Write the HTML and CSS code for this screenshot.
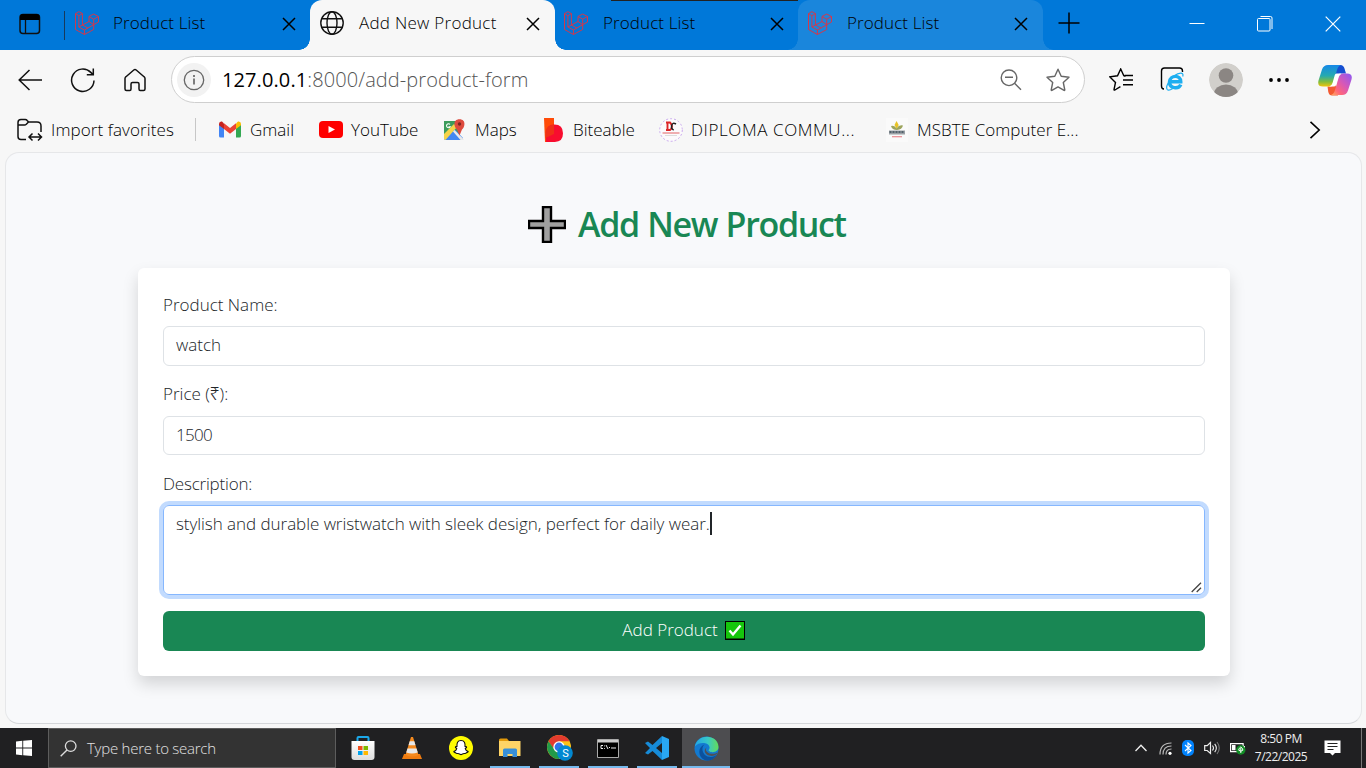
FILE: index.html
```html
<!DOCTYPE html>
<html lang="en">
<head>
<meta charset="utf-8">
<title>Add New Product</title>
<link rel="stylesheet" href="styles.css">
</head>
<body>
<svg class="defs" width="0" height="0">
  <symbol id="laravel" viewBox="0 0 24 24">
    <g fill="none" stroke="#dc3545" stroke-width=".95" stroke-linejoin="round">
      <path d="M.5 2.600 3.900.6 7.400 2.600V14L14 10.500v-5L18.700 3l4.800 2.500V11l-4.800 2.700v4.800l-9.300 5-8.900-5z"/>
      <path d="M.5 2.600 3.900 4.700 7.400 2.600M3.900 4.700V16l5.500 3 9.300-5.300M14 5.500l4.700 2.700 4.800-2.700M18.700 8.200v5.500M14 10.500l4.700 3.200M9.400 19v4.500M3.900 16l3.500-2 5.500 3"/>
    </g>
  </symbol>
  <symbol id="close" viewBox="0 0 14 14"><path d="M1 1 13 13M13 1 1 13" fill="none" stroke="currentColor" stroke-width="1.500"/></symbol>
</svg>

<header class="tabbar">
  <div class="workspace">
    <svg width="22" height="22" viewBox="0 0 22 22"><rect x="1" y="1.500" width="19.500" height="19" rx="3" fill="none" stroke="#101010" stroke-width="1.500"/><path d="M1 7V4a3 3 0 0 1 3-3h13.500a3 3 0 0 1 3 3v3z" fill="#000"/><path d="M6.500 7v13" stroke="#101010" stroke-width="1.300"/></svg>
  </div>
  <div class="tab tab-first"><svg class="fav"><use href="#laravel"/></svg><span class="tab-title">Product List</span><svg class="x"><use href="#close"/></svg></div>
  <div class="tab tab-active">
    <svg class="fav" viewBox="0 0 24 24"><g fill="none" stroke="#111" stroke-width="1.400"><circle cx="12" cy="12" r="11.200"/><ellipse cx="12" cy="12" rx="5" ry="11.200"/><path d="M2 7.700h20M2 16.300h20"/></g></svg>
    <span class="tab-title">Add New Product</span><svg class="x"><use href="#close"/></svg>
  </div>
  <div class="tab tab-third"><svg class="fav"><use href="#laravel"/></svg><span class="tab-title">Product List</span><svg class="x"><use href="#close"/></svg></div>
  <div class="tab tab-hover"><svg class="fav"><use href="#laravel"/></svg><span class="tab-title">Product List</span><svg class="x"><use href="#close"/></svg></div>
  <svg class="newtab" width="22" height="22" viewBox="0 0 22 22"><path d="M11 .5v21M.5 11h21" stroke="#000" stroke-width="1.500"/></svg>
  <div class="window-buttons">
    <svg width="16" height="16" viewBox="0 0 16 16"><path d="M.5 7.500h15" stroke="#fff"/></svg>
    <svg width="16" height="16" viewBox="0 0 16 16"><rect x=".5" y="2.500" width="12.500" height="12.500" rx="1" fill="none" stroke="#fff"/><path d="M3.500 .5h10a1.500 1.500 0 0 1 1.500 1.500v11" fill="none" stroke="#fff"/></svg>
    <svg width="16" height="16" viewBox="0 0 16 16"><path d="M.7.7 15.300 15.300M15.300.7.7 15.300" stroke="#fff" stroke-width="1.200"/></svg>
  </div>
</header>

<nav class="toolbar">
  <svg class="nav-back" width="24" height="22" viewBox="0 0 24 22"><path d="M11.500 1 1.200 11l10.300 10M1.200 11H24" fill="none" stroke="#111" stroke-width="1.500"/></svg>
  <svg class="nav-reload" width="26" height="26" viewBox="0 0 26 26"><path d="M24 13.500A11.200 11.200 0 1 1 20.800 5.400L23 7.600M23.300 1.500v6.300h-6.500" fill="none" stroke="#111" stroke-width="1.500"/></svg>
  <svg class="nav-home" width="22" height="24" viewBox="0 0 22 24"><path d="M1 10.600Q1 9.500 2 8.700L9.800 2q1.200-1 2.400 0L20 8.700q1 .8 1 1.900V21q0 1.500-1.500 1.500h-3.300q-1.200 0-1.200-1.500v-5q0-1.500-1.500-1.500h-5Q7 14.500 7 16v5q0 1.500-1.200 1.500H2.500Q1 22.500 1 21z" fill="none" stroke="#111" stroke-width="1.500"/></svg>
  <div class="address">
    <span class="site-info"><svg width="22" height="22" viewBox="0 0 22 22"><circle cx="11" cy="11" r="9.700" fill="none" stroke="#666" stroke-width="1.300"/><path d="M11 9.500v6" stroke="#555" stroke-width="1.500"/><circle cx="11" cy="6.900" r="1" fill="#555"/></svg></span>
    <span class="url"><b>127.0.0.1</b>:8000/add-product-form</span>
    <svg class="zoom-out" width="22" height="22" viewBox="0 0 22 22"><circle cx="9" cy="8.800" r="7.800" fill="none" stroke="#666" stroke-width="1.400"/><path d="M5 8.300h8M14.800 14.500l6.200 6.200" stroke="#666" stroke-width="1.400"/></svg>
    <svg class="star" width="24" height="24" viewBox="0 0 24 24"><path d="M12 1.200l3.200 7 7.800 1-5.700 5.300 1.500 7.500q0 .6-.7.400L12 18.900l-6.100 3.500q-.7.200-.7-.4l1.500-7.500L1 9.200l7.800-1z" fill="none" stroke="#666" stroke-width="1.400" stroke-linejoin="round"/></svg>
  </div>
  <svg class="fav-list" width="24" height="24" viewBox="0 0 24 24"><path d="M16.500 8.300 14.800 7.700 11.700 1 8.500 7.800.9 8.900l5.600 5.500L5 21.500q0 .9.900.5l5.500-3.300M14 12h10M15.500 7.500H24M14 16.800h10" fill="none" stroke="#000" stroke-width="1.400"/></svg>
  <svg class="ie" width="24" height="25" viewBox="0 0 24 25"><path d="M22.500 5V4q0-3-3-3h-15q-3 0-3 3v15q0 3 2.500 3" fill="none" stroke="#000" stroke-width="1.400"/><path d="M9.500 14.800h11.300c.2-7.300-10.800-7.300-11.300 0-.2 7 9.200 7.700 11.300 2.800" fill="none" stroke="#1eaef0" stroke-width="3.400"/><path d="M22.700 9.500c1.500-5-4-4-8.700-.4-5 3.900-8.700 10.500-6.800 13.400 1 1.300 3.300.5 5.500-1" fill="none" stroke="#1eaef0" stroke-width="1.200"/></svg>
  <svg class="avatar" width="34" height="34" viewBox="0 0 34 34"><defs><clipPath id="face"><circle cx="17" cy="17" r="17"/></clipPath></defs><g clip-path="url(#face)"><circle cx="17" cy="17" r="17" fill="#d1cfcb"/><circle cx="17" cy="12.500" r="7.300" fill="#8b8683"/><ellipse cx="17" cy="31" rx="12" ry="9.500" fill="#8b8683"/></g></svg>
  <svg class="more" width="20" height="4" viewBox="0 0 20 4"><g fill="#000"><circle cx="2" cy="2" r="1.900"/><circle cx="10" cy="2" r="1.900"/><circle cx="18" cy="2" r="1.900"/></g></svg>
  <svg class="copilot" width="34" height="32" viewBox="0 0 34 32">
    <defs>
      <linearGradient id="cpA" x1="0" y1="0" x2="0" y2="1"><stop offset="0" stop-color="#1688e8"/><stop offset=".5" stop-color="#25aab0"/><stop offset=".78" stop-color="#83bd3c"/><stop offset="1" stop-color="#f1c40a"/></linearGradient>
      <linearGradient id="cpB" x1="1" y1="0" x2="0" y2="1"><stop offset="0" stop-color="#8c58f4"/><stop offset=".45" stop-color="#d858b6"/><stop offset=".75" stop-color="#ff667a"/><stop offset="1" stop-color="#ffae58"/></linearGradient>
    </defs>
    <path d="M17 1h5.500q3 0 4 3.500l1.500 5h-5q-4 0-5.500 4z" fill="#164fd1"/>
    <path d="M9.500 22.500h3q3.500 0 4.500-4l3 13h-6q-2.800 0-3.700-3.500z" fill="#f35a32"/>
    <path d="M10 1h13q-3 1-4 5l-3.500 12q-1.300 4.500-5 4.500H5q-6 0-4.500-6L4 5.500Q5.500 1 10 1z" fill="url(#cpA)"/>
    <path d="M24 31H13q3-1 4-5l3.500-12q1.200-4.500 5-4.500H29q6 0 4.500 6L30 26.500Q28.500 31 24 31z" fill="url(#cpB)"/>
    <path d="M18.500 9.500h4.800q-2.300.8-3 3.500l-2.300 8q-.6 1.500-2.200 1.500h-4.600q2.600-.8 3.300-3.500l2.300-8q.5-1.500 1.700-1.500z" fill="#fff"/>
  </svg>
</nav>

<nav class="bookmarks">
  <a class="bm bm-import"><svg width="26" height="24" viewBox="0 0 26 24"><path d="M9 21.500H4q-3 0-3-3v-14q0-3 3-3h4.200q1.200 0 2 1L11.500 4H20q4 0 4 4v6M1 7h6.500q1 0 1.800-.8L11.500 4M12 19h12.500M15.500 15.500 12 19l3.500 3.500M21 15.500l3.500 3.500-3.500 3.500" fill="none" stroke="#111" stroke-width="1.500"/></svg><span>Import favorites</span></a>
  <i class="bm-divider"></i>
  <a class="bm bm-gmail"><svg width="22" height="17" viewBox="0 0 22 17"><path d="M0 3v12q0 1.500 1.500 1.500H5V7z" fill="#4285f4"/><path d="M22 3v12q0 1.500-1.500 1.500H17V7z" fill="#34a853"/><path d="M17 2.500V8l5-3.800V3q0-3-3-2.500z" fill="#fbbc04"/><path d="M0 4.200 5 8V2.500L3 .5Q0 0 0 3z" fill="#c5221f"/><path d="M5 2.300 11 7l6-4.700V8l-6 4.700L5 8z" fill="#ea4335"/></svg><span>Gmail</span></a>
  <a class="bm bm-youtube"><svg width="24" height="17" viewBox="0 0 24 17"><rect width="24" height="17" rx="4" fill="#f00"/><path d="M9.500 5v7l6.500-3.500z" fill="#fff"/></svg><span>YouTube</span></a>
  <a class="bm bm-maps"><svg width="22" height="22" viewBox="0 0 22 22"><path d="M1 2h15v18H1z" fill="#3c9b5b"/><path d="M1 21 11.500 10 20 19v2z" fill="#4287f1"/><path d="M1 20V15L11 5l3 3L2.500 21z" fill="#f6d348"/><path d="m11.500 11 9 9v1h-3L10 12.500z" fill="#e9e9e9"/><path d="M16.500.3c-7 0-5.500 8-2.500 10.200l2.500 6 2.500-6C22 8 23.300.3 16.500.3z" fill="#dd4b3e"/><circle cx="16.500" cy="5" r="1.700" fill="#7c2720"/><path d="M7 5.300a2 2 0 1 0 .3 2.400H5.500" fill="none" stroke="#fff" stroke-width="1.100"/></svg><span>Maps</span></a>
  <a class="bm bm-biteable"><svg width="20" height="24" viewBox="0 0 20 24"><path d="M0 0h10v7l-5 17H1z" fill="#ff4b08"/><path d="M2 24V15q0-8.500 8.500-8.500T19 15.300 10.500 24z" fill="#f80d2f"/><path d="M1.500 20V14q1-7 8.500-7.500V16z" fill="#f03018"/></svg><span>Biteable</span></a>
  <a class="bm bm-diploma"><svg width="24" height="24" viewBox="0 0 24 24"><circle cx="12" cy="12" r="11.300" fill="#fcfafc" stroke="#c8a8ee" stroke-dasharray="2 2"/><path d="M8.500 4v8M7 4.500h4q4 4 0 7.500H7" fill="none" stroke="#dc2428" stroke-width="1.900"/><path d="M17 6q-3.500-2-4.300 1.500t2 4.500" fill="none" stroke="#222" stroke-width="1.500"/><path d="M3.500 15h17" stroke="#e88587" stroke-width="1.300"/><path d="M6 17.500h12" stroke="#ddd" stroke-width="1"/></svg><span>DIPLOMA COMMU...</span></a>
  <a class="bm bm-msbte"><svg width="22" height="24" viewBox="0 0 22 24"><path fill="#fafafa" d="M0 0h22v24H0z"/><path d="m10.500 3 2.200 4-2 4-2.200-4z" fill="#e8c326"/><path d="M5 8q4-1 5.500 2.500Q13 6.500 17 7.500q-1 4-6 4.500-5 0-6-4z" fill="#9ca45c"/><path d="M3 12.500h16v4H3z" fill="#9aa0a5"/><path d="M3.500 14h15" stroke="#3b4c58" stroke-width="1.500" stroke-dasharray="2 1"/><path d="M6 18.700h10" stroke="#ea8c92" stroke-width="1.200"/></svg><span>MSBTE Computer E...</span></a>
  <svg class="chevron" width="12" height="18" viewBox="0 0 12 18"><path d="m1.500.8 8.700 8.200-8.700 8.200" fill="none" stroke="#000" stroke-width="1.600"/></svg>
</nav>

<main class="page">
  <h1 class="page-title">
    <svg width="38" height="37" viewBox="0 0 38 37"><path d="M15 1h8v14h14v7H23v14h-8V22H1v-7h14z" fill="#a0a0a0" stroke="#000" stroke-width="2.400"/></svg>
    <span>Add New Product</span>
  </h1>
  <form class="card">
    <label class="label label-name">Product Name:</label>
    <div class="control control-name"><span>watch</span></div>
    <label class="label label-price">Price (₹):</label>
    <div class="control control-price"><span class="price-text">1500</span></div>
    <label class="label label-desc">Description:</label>
    <div class="control control-area">
      <span class="desc-text">stylish and durable wristwatch with sleek design, perfect for daily wear.</span><i class="caret"></i>
      <svg class="grip" width="11" height="11" viewBox="0 0 11 11"><path d="M.7 10 10 .7M5.700 10 10 5.700" stroke="#444" stroke-width="1.300"/></svg>
    </div>
    <div class="submit"><span>Add Product</span><svg width="20" height="19" viewBox="0 0 20 19"><path d="M0 0h20v19H0z"/><path d="M1 1h18v16.500H1z" fill="#16c60c"/><path d="m4.500 9.500 3.500 4 7.500-9" fill="none" stroke="#fff" stroke-width="2.400"/></svg></div>
  </form>
</main>

<footer class="taskbar">
  <div class="start"><svg width="16" height="16" viewBox="0 0 16 16"><path d="M0 1.500 6.300.8v6.700H0zM7.200.7 16 0v7.500H7.200zM0 8.400h6.300v6.800L0 14.500zM7.200 8.400H16V16l-8.800-.8z" fill="#fff"/></svg></div>
  <div class="search"><svg width="17" height="17" viewBox="0 0 17 17"><circle cx="10.700" cy="6.100" r="5.300" fill="none" stroke="#ddd" stroke-width="1.300"/><path d="M7 10 .7 16.300" stroke="#ddd" stroke-width="1.400"/></svg><span>Type here to search</span></div>
  <div class="apps">
    <div class="app"><svg width="24" height="24" viewBox="0 0 24 24"><defs><linearGradient id="bag" x2="0" y2="1"><stop stop-color="#fff"/><stop offset="1" stop-color="#ddd"/></linearGradient></defs><path d="M6.500 6V2q0-1 1-1h9q1 0 1 1v4" fill="none" stroke="#1ba8ea" stroke-width="2"/><path d="M.5 5h23v16q0 3-3 3h-17q-3 0-3-3z" fill="url(#bag)"/><path d="M7 10h4.500v4H7z" fill="#f04e1f"/><path d="M12.500 10H17v4h-4.500z" fill="#7db900"/><path d="M7 15h4.500v4H7z" fill="#00a3ee"/><path d="M12.500 15H17v4h-4.500z" fill="#ffb800"/></svg></div>
    <div class="app"><svg width="20" height="22" viewBox="0 0 20 22"><path d="M2 17h16l2 5H0z" fill="#f07c10"/><path d="M9 0h2l5.500 18q-6.500 3-13 0z" fill="#f58a1f"/><path d="M7.700 4.200h4.600l1.200 4h-7zM5.500 11.500h9l1.300 4q-5.800 2-11.600 0z" fill="#e8e8e8"/></svg></div>
    <div class="app"><svg width="24" height="24" viewBox="0 0 24 24"><circle cx="12" cy="12" r="12" fill="#fffc00"/><path d="M12 4.500c-3.500 0-4.300 2.500-4 6-.8.300-1.600-.1-1.600.7 0 .7 1.200.8 1.400 1.500-.4 1.500-1.800 2.500-3 2.900 0 1 1.600.9 2 1.200.4 1.400 1.700.3 3 .9 1.300 1.100 3.100 1.100 4.400 0 1.300-.6 2.600.5 3-.9.400-.3 2-.2 2-1.200-1.200-.4-2.600-1.400-3-2.900.2-.7 1.400-.8 1.400-1.500 0-.8-.8-.4-1.600-.7.300-3.500-.5-6-4-6z" fill="#fff" stroke="#111" stroke-width="1.100"/></svg></div>
    <div class="app running"><svg width="22" height="20" viewBox="0 0 22 20"><path d="M0 2q0-1.500 1.500-1.500H8L10 3H0z" fill="#e39a0b"/><path d="M0 3h21.500v15H0z" fill="#ffd466"/><path d="M4 19v-7q0-1.500 1.500-1.500h11Q18 10.500 18 12v7h-4.500v-3h-5v3z" fill="#388fd8"/></svg></div>
    <div class="app running chrome"><svg width="26" height="26" viewBox="0 0 26 26"><circle cx="12" cy="12" r="12" fill="#fbc117"/><path d="M12 0A12 12 0 0 1 22.500 6.200L12 6.200 6 13 1.500 6.200A12 12 0 0 1 12 0z" fill="#e33b2e"/><path d="M1.500 6.200A12 12 0 0 0 12 24l4-9-9-1z" fill="#229a49"/><circle cx="12" cy="12" r="5.700" fill="#fff"/><circle cx="12" cy="12" r="4.400" fill="#2f74ea"/><circle cx="18" cy="18" r="7.800" fill="#0288d1"/></svg><b class="profile">S</b></div>
    <div class="app running"><svg width="22" height="19" viewBox="0 0 22 19"><path d="M.5.5h21v18H.5z" fill="#000" stroke="#aaa"/><path d="M1 1h20v2.500H1z" fill="#ccc"/><path d="M6 6.500H4v3h2M7.500 6.500v.8M7.500 9v.8M9 6l2 4M12 8.500h1M14 9h5" fill="none" stroke="#eee"/></svg></div>
    <div class="app running"><svg width="24" height="24" viewBox="0 0 24 24"><path d="M17 0 7.500 9 3 5.500 0 7l5 5-5 5 3 1.500L7.500 15 17 24V17l-6-5 6-5z" fill="#168bd8"/><path d="m17 0 7 3v18l-7 3z" fill="#29a7f2"/></svg></div>
    <div class="app running current"><svg width="25" height="25" viewBox="0 0 25 25"><defs><linearGradient id="edgeTop"><stop stop-color="#23a5e6"/><stop offset=".55" stop-color="#38c9c6"/><stop offset="1" stop-color="#64dc58"/></linearGradient></defs><circle cx="12.500" cy="12.500" r="12" fill="#137ad0"/><path d="M.8 10.500C3.500-3 24-2 24.500 11c0 5-6.500 6.500-9.500 4-1.500-1 1-1.500.5-4C14.500 6 5 5.500.8 10.500z" fill="url(#edgeTop)"/><path d="M10.500 8.500c-4 3-2 11.500 4.500 12.300 3.500.5 6-.7 8-2.300-3 5.500-8 7-12 5.800C3.500 21 3.500 11 10.500 8.500z" fill="#0b519d"/><path d="M12.500 11.500c-1.500 2.500 0 5.500 4.500 6.300 3 .3 5.200-.4 6.500-1.500L22.800 18c-2 2-5 2.300-7.800 1.500-4.500-1-5.500-6-2.500-8z" fill="#505054"/></svg></div>
  </div>
  <div class="tray">
    <svg class="t-up" width="12" height="8" viewBox="0 0 12 8"><path d="m.5 7 5.500-5.800L11.500 7" fill="none" stroke="#eee" stroke-width="1.300"/></svg>
    <svg class="t-wifi" width="13" height="13" viewBox="0 0 13 13"><g fill="none" stroke="#bbb" stroke-width="1.200"><path d="M1 12.500Q1 1 12.500 1M4 12.500Q4 4 12.500 4M7 12.500Q7 7 12.500 7"/></g><circle cx="11" cy="11.300" r="1.600" fill="#fff"/></svg>
    <svg class="t-bt" width="12" height="16" viewBox="0 0 12 16"><rect width="12" height="16" rx="5" fill="#0082fc"/><path d="m3 5 6 5.500L6 13V3l3 2.500L3 11" fill="none" stroke="#fff" stroke-width="1.100"/></svg>
    <svg class="t-sound" width="17" height="14" viewBox="0 0 17 14"><path d="M.7 4.700h2.500L6.500 1.500v11L3.200 9.500H.7z" fill="none" stroke="#eee" stroke-width="1.200"/><path d="M8.500 4.500q2 2.500 0 5M10.700 2.800q3.300 4.200 0 8.400" fill="none" stroke="#eee" stroke-width="1.100"/><path d="M13 1q4.500 6 0 12" fill="none" stroke="#777" stroke-width="1.100"/></svg>
    <svg class="t-batt" width="16" height="13" viewBox="0 0 16 13"><path d="M.6 1.600h12.500v8H.6z" fill="none" stroke="#fff" stroke-width="1.200"/><path d="M2 3h3.500v5.200H2zM13.500 4H15v3h-1.500z" fill="#fff"/><circle cx="10.800" cy="8" r="4.700" fill="#118d25"/><path d="M10.800 11V6M8.700 8.200q0-2 2.100-3.200 2.100 1.200 2.100 3.200-2 2-4.200 0z" fill="none" stroke="#fff" stroke-width="1"/></svg>
    <div class="clock"><span class="time">8:50 PM</span><span class="date">7/22/2025</span></div>
    <svg class="t-note" width="17" height="16" viewBox="0 0 17 16"><path d="M.5.500h16v12.500h-5.500L8.500 15.500 6 13H.5z" fill="#fff"/><path d="M3.500 3.500h10M3.500 6.500h10M3.500 9.500h6" stroke="#222" stroke-width="1.100"/></svg>
    <i class="show-desktop"></i>
  </div>
</footer>
</body>
</html>
```
FILE: styles.css
```css
* { box-sizing: border-box; }
body { margin: 0; width: 1366px; height: 768px; overflow: hidden; display: flex; flex-direction: column; background: #f7f7f7; color: #000; font-family: "Open Sans", "Noto Sans", sans-serif; font-weight: 330; font-size: 17px; }
svg { display: block; flex: none; }
span { white-space: nowrap; }
.defs { position: absolute; }

/* tab strip */
.tabbar { height: 50px; display: flex; background: #0078d9; flex: none; }
.workspace { width: 65px; height: 29px; margin-top: 11px; padding: 2px 0 0 19px; border-right: 1px solid #173a5c; }
.tab { position: relative; width: 244px; height: 50px; display: flex; padding: 11px 14px 0 11px; }
.tab-first { width: 245px; padding-left: 10px; }
.tab-active { width: 245px; padding-left: 10px; padding-right: 15px; background: #f7f7f7; border-radius: 12px 12px 0 0; }
.tab-third { width: 243px; padding-left: 9px; background: linear-gradient(#222, #222) 56px 0 / 187px 1px no-repeat; }
.tab-hover { width: 245px; padding-left: 10px; padding-right: 15px; background: #1a86dc; border-radius: 12px 12px 0 0; }
.tab-active::before, .tab-active::after, .tab-hover::before, .tab-hover::after { content: ""; position: absolute; bottom: 0; width: 11px; height: 11px; }
.tab-active::before { left: -11px; background: radial-gradient(circle at 0 0, transparent 10.500px, #f7f7f7 11px); }
.tab-active::after { right: -11px; background: radial-gradient(circle at 100% 0, transparent 10.500px, #f7f7f7 11px); }
.tab-hover::before { left: -11px; background: radial-gradient(circle at 0 0, transparent 10.500px, #1a86dc 11px); }
.tab-hover::after { right: -11px; background: radial-gradient(circle at 100% 0, transparent 10.500px, #1a86dc 11px); }
.fav { width: 24px; height: 24px; }
.tab-title { margin-left: 14px; line-height: 24px; letter-spacing: .1px; flex: 1; }
.tab-third .tab-title, .tab-hover .tab-title, .tab-active .tab-title { margin-left: 15px; }
.tab-active .tab-title { letter-spacing: .27px; }
.x { width: 14px; height: 14px; margin-top: 6px; }
.newtab { margin: 12px 0 0 15px; }
.window-buttons { display: flex; gap: 52px; margin: 16px 0 0 109px; }

/* toolbar */
.toolbar { height: 56px; display: flex; align-items: center; flex: none; padding: 3px 0 0 18px; }
.nav-reload { margin-left: 28px; }
.nav-home { margin-left: 28px; }
.address { display: flex; align-items: center; width: 914px; height: 47px; margin-left: 25px; padding-left: 5px; border: 1.500px solid #cfcfcf; border-radius: 24px; background: #fff; }
.site-info { width: 34px; height: 34px; border-radius: 50%; background: #f2f2f2; padding: 6px; }
.url { flex: 1; margin-left: 11px; font-size: 20px; letter-spacing: .1px; color: #555; }
.url b { color: #000; font-weight: 400; }
.zoom-out { margin-right: 24px; }
.star { margin-right: 14px; }
.fav-list { margin-left: 24px; }
.ie { margin-left: 27px; }
.avatar { margin-left: 25px; }
.more { margin-left: 26px; }
.copilot { margin-left: 29px; }

/* bookmarks */
.bookmarks { position: relative; height: 46px; display: flex; align-items: center; flex: none; padding: 1px 0 0 17px; }
.bm { display: flex; align-items: center; }
.bm-import { gap: 8px; width: 178px; letter-spacing: .1px; }
.bm-divider { width: 1px; height: 23px; background: #c7c7c7; }
.bm-gmail { gap: 9px; width: 100px; margin-left: 23px; }
.bm-youtube { gap: 8px; width: 124px; }
.bm-maps { gap: 10px; width: 101px; }
.bm-biteable { gap: 9px; width: 115px; }
.bm-diploma { gap: 8px; width: 227px; letter-spacing: .6px; }
.bm-msbte { gap: 9px; letter-spacing: .05px; }
.chevron { margin-left: auto; margin-right: 45px; }

/* page */
.page { flex: none; width: 1357px; height: 572px; margin: 0 0 4px 5px; border: 1px solid #e6e7e9; border-bottom-color: #d5d7da; border-radius: 14px; background: #f8f9fb; padding: 46px 131px 0 132px; color: #212529; }
.page-title { margin: 0; height: 51px; display: flex; align-items: center; padding-left: 390px; gap: 12px; font-size: 34px; font-weight: 550; letter-spacing: -1.350px; word-spacing: 1px; color: #198754; }
.page-title span { padding-bottom: 2px; }
.card { width: 1092px; height: 408px; margin-top: 18px; padding: 25px; background: #fff; border-radius: 6px; box-shadow: 0 8px 16px rgba(0,0,0,.15); }
.label { display: block; height: 25px; line-height: 23px; margin-bottom: 8px; }
.label-price { margin-top: 16px; margin-bottom: 9px; }
.label-desc { margin-top: 17px; letter-spacing: -.2px; }
.control { height: 40px; border: 1px solid #dee2e6; border-radius: 6px; padding: 0 12px; line-height: 35px; }
.control-price { height: 39px; letter-spacing: -.7px; }
.control-area { position: relative; height: 90px; display: flex; border-color: #86b7fe; box-shadow: 0 0 0 4px #c2dbfe; letter-spacing: -.045px; }
.caret { width: 2px; height: 23px; margin-top: 6px; background: #212529; }
.grip { position: absolute; right: 2px; bottom: 1px; }
.submit { height: 40px; margin-top: 16px; padding: 0 1px 4px 0; display: flex; align-items: center; justify-content: center; gap: 7px; border-radius: 6px; background: #198754; color: #fff; }
.submit svg { margin-top: 2px; }

/* taskbar */
.taskbar { height: 40px; display: flex; flex: none; background: #202022; }
.start { width: 48px; padding: 12px 0 0 16px; }
.search { width: 288px; border: 1px solid #5d5d5d; background: #333; display: flex; align-items: center; gap: 10px; padding-left: 11px; font-size: 15px; letter-spacing: -.25px; color: #e2e2e2; }
.apps { display: flex; margin-left: 3px; gap: 1px; }
.app { position: relative; width: 48px; height: 40px; display: flex; align-items: center; justify-content: center; }
.running { background: linear-gradient(#76b9ed, #76b9ed) 50% 100% / 40px 2px no-repeat; }
.current { background: linear-gradient(#76b9ed, #76b9ed) 50% 100% / 48px 2px no-repeat #4d4d50; }
.chrome { padding-left: 2px; }
.profile { position: absolute; left: 26px; top: 17px; width: 9px; font: 400 11px/17px Roboto, sans-serif; color: #fff; text-align: center; }
.tray { display: flex; align-items: center; margin-left: auto; }
.t-wifi { margin-left: 12px; }
.t-bt { margin-left: 10px; }
.t-sound { margin-left: 10px; }
.t-batt { margin-left: 9px; }
.clock { width: 60px; margin-left: 5px; display: flex; flex-direction: column; align-items: center; font: 400 12px/18px "Open Sans", sans-serif; letter-spacing: -.5px; color: #eee; }
.t-note { margin-left: 13px; }
.show-desktop { width: 1px; height: 40px; margin: 0 4px 0 20px; background: #777; }
```
